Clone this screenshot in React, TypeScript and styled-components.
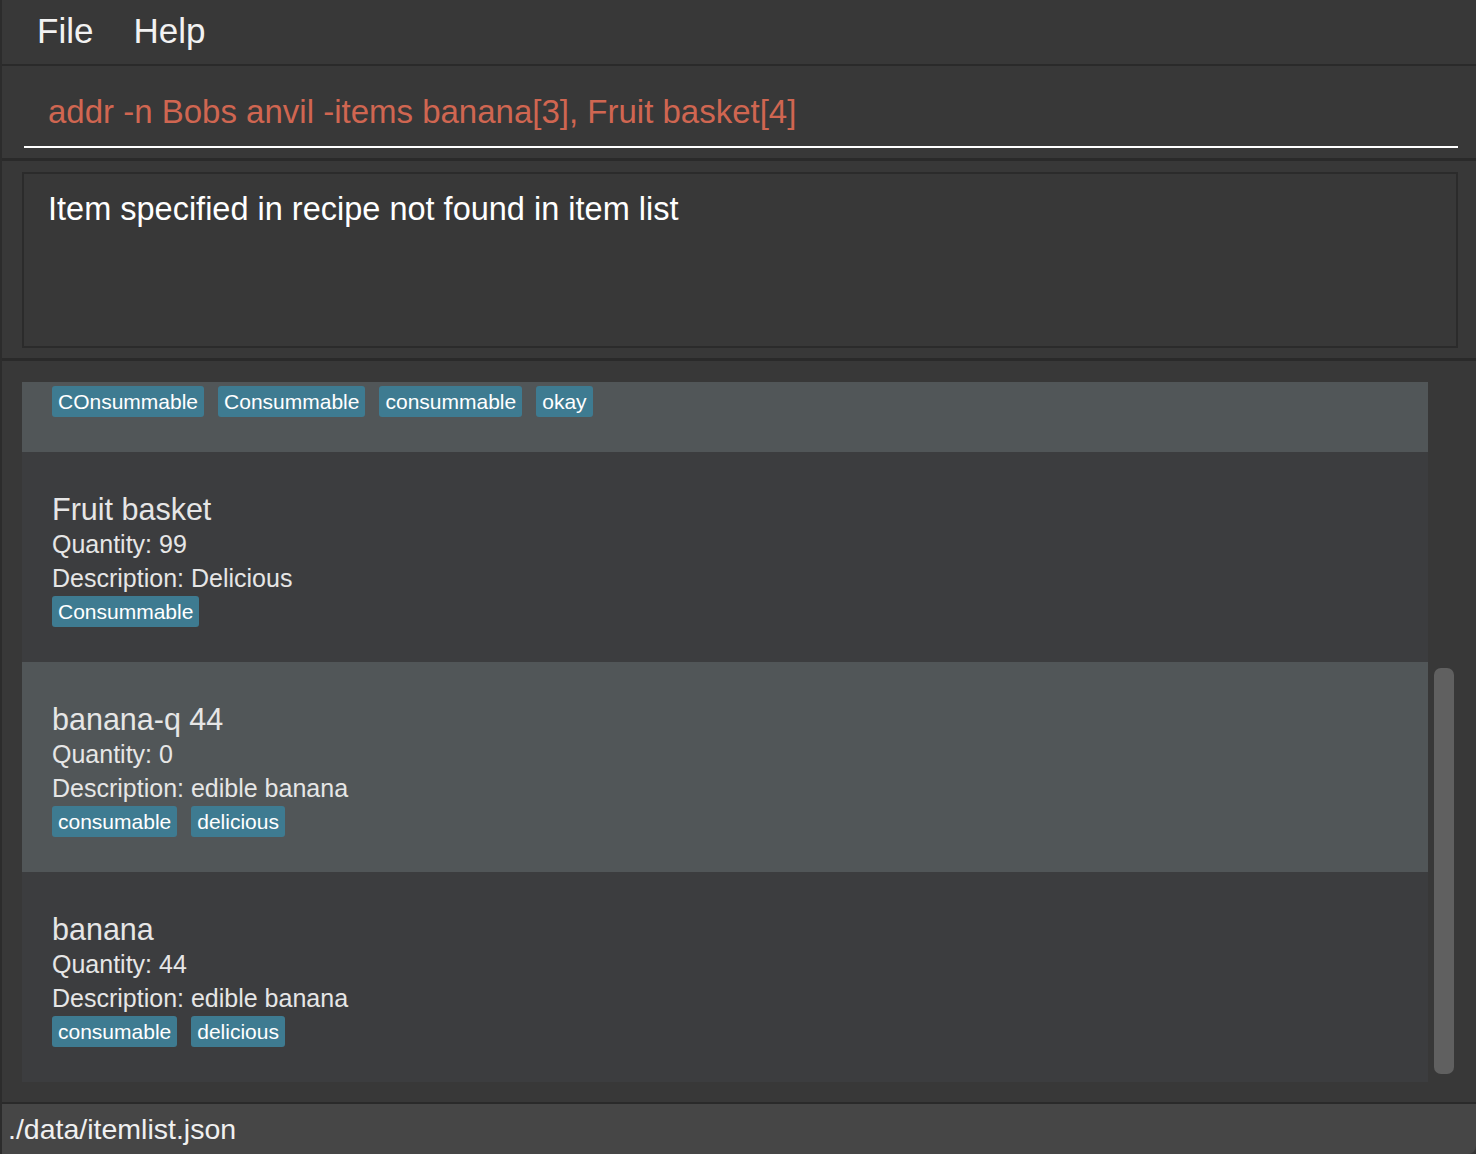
import React, { useLayoutEffect, useRef } from 'react'
import styled, { createGlobalStyle } from 'styled-components'

const GlobalStyle = createGlobalStyle`
  html, body {
    margin: 0;
    padding: 0;
    background: #383838;
  }
  * {
    box-sizing: border-box;
  }
`

const Window = styled.div`
  width: 1476px;
  height: 1154px;
  display: flex;
  flex-direction: column;
  background: #383838;
  border-left: 2px solid #2c2c2c;
  font-family: 'Liberation Sans', Arial, sans-serif;
  overflow: hidden;
`

const MenuBar = styled.div`
  height: 66px;
  display: flex;
  align-items: flex-start;
  gap: 40px;
  padding-left: 35px;
  border-bottom: 2px solid #2a2a2a;
`

const MenuItem = styled.span`
  font-size: 35px;
  line-height: 62px;
  color: #f2f2f2;
`

const CommandPane = styled.div`
  height: 95px;
  padding: 26px 18px 0 22px;
  border-bottom: 3px solid #2a2a2a;
`

const CommandInput = styled.div`
  padding: 0 24px 14px;
  border-bottom: 2px solid #ffffff;
  font-size: 33px;
  line-height: 40px;
  color: #d06651;
  white-space: nowrap;
`

const ResultPane = styled.div`
  height: 200px;
  padding: 11px 18px 0 20px;
  border-bottom: 3px solid #2a2a2a;
`

const ResultBox = styled.div`
  height: 176px;
  border: 2px solid #2b2b2b;
  padding: 15px 24px 0;
  font-size: 32.5px;
  line-height: 40px;
  color: #ffffff;
`

const ListPane = styled.div`
  flex: 1;
  display: flex;
  padding: 21px 0 0 20px;
`

const ListViewport = styled.div`
  width: 1406px;
  height: 700px;
  overflow: hidden;
`

const ScrollTrack = styled.div`
  flex: 1;
  padding-left: 6px;
`

const ScrollThumb = styled.div`
  width: 20px;
  height: 406px;
  margin-top: 286px;
  border-radius: 7px;
  background: #606060;
`

const Card = styled.div<{ $light: boolean }>`
  height: 210px;
  padding: 39px 30px 0;
  background: ${(p) => (p.$light ? '#515658' : '#3c3d3f')};
  color: #e6e6e6;
`

const Name = styled.div`
  font-size: 30.5px;
  line-height: 36px;
`

const Detail = styled.div`
  font-size: 25px;
  line-height: 34px;
`

const Tags = styled.div`
  display: flex;
  gap: 14px;
  margin-top: 1px;
`

const Tag = styled.span`
  height: 31px;
  padding: 0 6px;
  border-radius: 3px;
  background: #3e7b91;
  color: #ffffff;
  font-size: 21px;
  line-height: 31px;
`

const StatusBar = styled.div`
  height: 52px;
  padding: 1px 0 0 6px;
  border-top: 2px solid #2a2a2a;
  background: #464646;
  border-bottom-right-radius: 8px;
  font-size: 28.5px;
  line-height: 49px;
  color: #f0f0f0;
`

interface IItem {
  name: string
  quantity: number
  description: string
  tags: string[]
}

const items: IItem[] = [
  {
    name: 'Bobs anvil',
    quantity: 2,
    description: 'Heavy iron anvil',
    tags: ['COnsummable', 'Consummable', 'consummable', 'okay']
  },
  { name: 'Fruit basket', quantity: 99, description: 'Delicious', tags: ['Consummable'] },
  {
    name: 'banana-q 44',
    quantity: 0,
    description: 'edible banana',
    tags: ['consumable', 'delicious']
  },
  { name: 'banana', quantity: 44, description: 'edible banana', tags: ['consumable', 'delicious'] }
]

const ItemCard = ({ item, index }: { item: IItem; index: number }) => (
  <Card $light={index % 2 === 0}>
    <Name>{item.name}</Name>
    <Detail>Quantity: {item.quantity}</Detail>
    <Detail>Description: {item.description}</Detail>
    <Tags>
      {item.tags.map((tag) => (
        <Tag key={tag}>{tag}</Tag>
      ))}
    </Tags>
  </Card>
)

const App = () => {
  const listRef = useRef<HTMLDivElement>(null)

  // the list is scrolled all the way down
  useLayoutEffect(() => {
    if (listRef.current) {
      listRef.current.scrollTop = listRef.current.scrollHeight
    }
  }, [])

  return (
    <Window>
      <GlobalStyle />
      <MenuBar>
        <MenuItem>File</MenuItem>
        <MenuItem>Help</MenuItem>
      </MenuBar>
      <CommandPane>
        <CommandInput>addr -n Bobs anvil -items banana[3], Fruit basket[4]</CommandInput>
      </CommandPane>
      <ResultPane>
        <ResultBox>Item specified in recipe not found in item list</ResultBox>
      </ResultPane>
      <ListPane>
        <ListViewport ref={listRef}>
          {items.map((item, i) => (
            <ItemCard key={item.name} item={item} index={i} />
          ))}
        </ListViewport>
        <ScrollTrack>
          <ScrollThumb />
        </ScrollTrack>
      </ListPane>
      <StatusBar>./data/itemlist.json</StatusBar>
    </Window>
  )
}

export default App
